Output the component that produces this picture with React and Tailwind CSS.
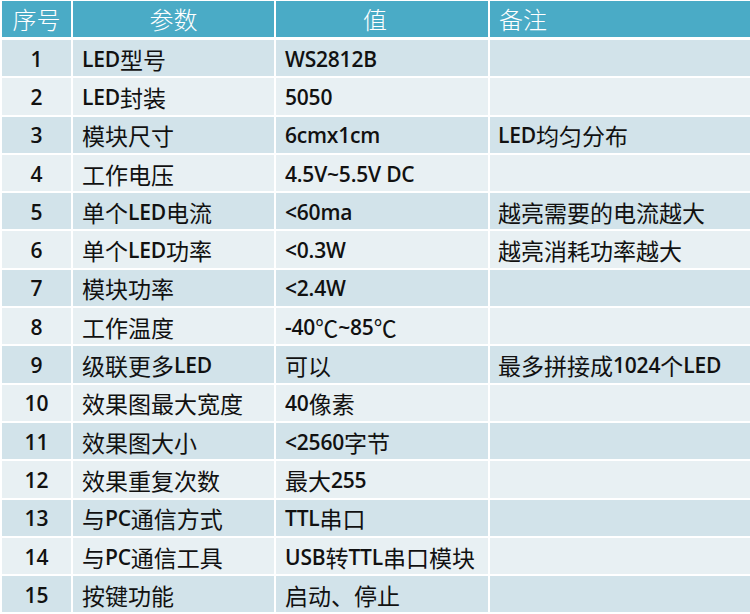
import React from "react";

const rows = [
  ["1", "LED型号", "WS2812B", ""],
  ["2", "LED封装", "5050", ""],
  ["3", "模块尺寸", "6cmx1cm", "LED均匀分布"],
  ["4", "工作电压", "4.5V~5.5V DC", ""],
  ["5", "单个LED电流", "<60ma", "越亮需要的电流越大"],
  ["6", "单个LED功率", "<0.3W", "越亮消耗功率越大"],
  ["7", "模块功率", "<2.4W", ""],
  ["8", "工作温度", "-40℃~85℃", ""],
  ["9", "级联更多LED", "可以", "最多拼接成1024个LED"],
  ["10", "效果图最大宽度", "40像素", ""],
  ["11", "效果图大小", "<2560字节", ""],
  ["12", "效果重复次数", "最大255", ""],
  ["13", "与PC通信方式", "TTL串口", ""],
  ["14", "与PC通信工具", "USB转TTL串口模块", ""],
  ["15", "按键功能", "启动、停止", ""],
];

function Mixed({ text }) {
  const parts = text.split(/([\x20-\x7E]+)/).filter((p) => p !== "");
  return (
    <>
      {parts.map((p, i) =>
        /^[\x20-\x7E]+$/.test(p) ? (
          <span key={i} className="font-semibold text-[21px] [font-family:'Open_Sans',sans-serif] tracking-[-0.2px]">
            {p}
          </span>
        ) : (
          <span key={i} className="font-normal text-[23px] [font-family:'Noto_Sans_CJK_SC',sans-serif]">
            {p}
          </span>
        )
      )}
    </>
  );
}

export default function App() {
  return (
    <div className="w-[750px] h-[614px] bg-white pt-px pl-[2px] overflow-hidden text-[#111] [font-family:'Noto_Sans_CJK_SC',sans-serif]">
      <div className="grid grid-cols-[69px_201px_212px_1fr] gap-x-[2px] h-[36px] bg-white">
        <div className="bg-[#4aabc6] flex items-center justify-center text-white text-[24px] font-light">序号</div>
        <div className="bg-[#4aabc6] flex items-center justify-center text-white text-[24px] font-light">参数</div>
        <div className="bg-[#4aabc6] flex items-center justify-center text-white text-[24px] font-light pr-[14px]">值</div>
        <div className="bg-[#4aabc6] flex items-center pl-[9px] text-white text-[24px] font-light">备注</div>
      </div>
      <div className="h-[3px]" />
      <div className="flex flex-col gap-y-[2px]">
        {rows.map((r, i) => {
          const bg = i % 2 === 0 ? "bg-[#d2e3ea]" : "bg-[#e8f0f3]";
          return (
            <div key={i} className="grid grid-cols-[69px_201px_212px_1fr] gap-x-[2px] h-[36.3px] leading-none">
              <div className={`${bg} flex items-center justify-center pt-[2px]`}>
                <span className="font-semibold text-[21px] [font-family:'Open_Sans',sans-serif]">{r[0]}</span>
              </div>
              <div className={`${bg} flex items-center pl-[9px] pt-[2px] whitespace-nowrap`}>
                <Mixed text={r[1]} />
              </div>
              <div className={`${bg} flex items-center pl-[9px] pt-[2px] whitespace-nowrap`}>
                <Mixed text={r[2]} />
              </div>
              <div className={`${bg} flex items-center pl-[8px] pt-[2px] whitespace-nowrap`}>
                <Mixed text={r[3]} />
              </div>
            </div>
          );
        })}
      </div>
    </div>
  );
}
